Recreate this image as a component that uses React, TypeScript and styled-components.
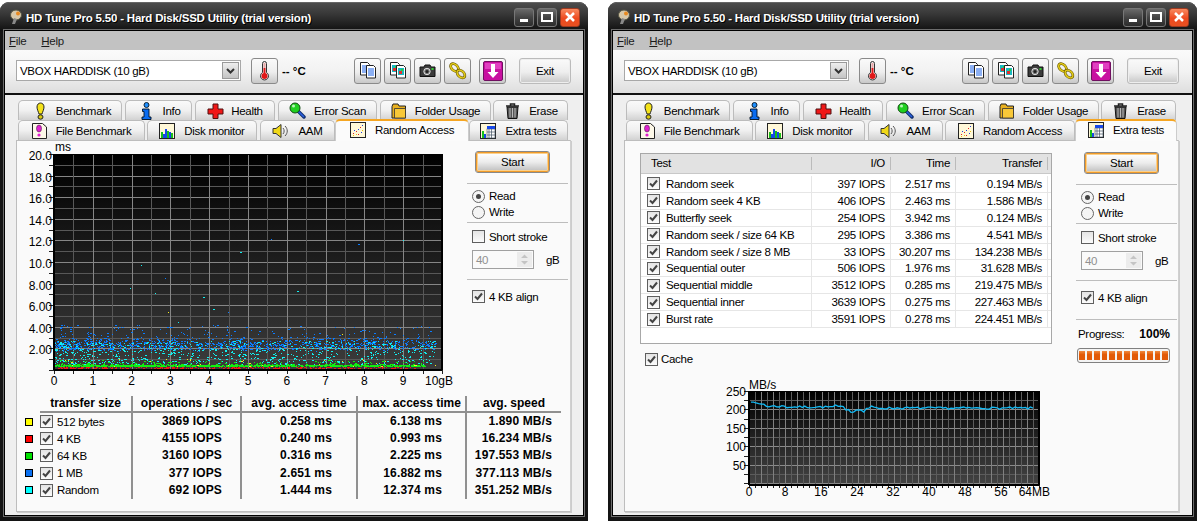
import React from 'react';
import styled, { createGlobalStyle } from 'styled-components';

const Global = createGlobalStyle`
  html, body { margin: 0; padding: 0; background: #fff; }
  #root { width: 1197px; height: 521px; overflow: hidden; }
  * { box-sizing: border-box; }
`;

const Page = styled.div`
  display: flex; gap: 20px; width: 1197px; height: 521px; padding-top: 2px; background: #fff;
  font: 11.5px "Liberation Sans", Arial, sans-serif; letter-spacing: -0.3px; color: #000; overflow: hidden;
`;
const Win = styled.div`
  flex: 0 0 ${p => p.$w}px; height: 519px; display: flex; flex-direction: column;
  background: #141414; border-radius: 9px 9px 0 0; padding: 0 5px 6px;
`;
const TitleBar = styled.div`
  height: 29px; margin: 0 -5px; padding: 0 8px 0 10px; display: flex; align-items: center;
  border-radius: 9px 9px 0 0; border-top: 1px solid #666;
  background: linear-gradient(#4c4c4c, #3a3a3a 35%, #1a1a1a 85%, #111);
`;
const TitleText = styled.div`
  flex: 1; margin-left: 2px; color: #fff; font-weight: 700; font-size: 11.5px; letter-spacing: -0.2px; padding-top: 1px;
  text-shadow: 1px 1px 0 #000;
`;
const WinBtn = styled.div`
  width: 20px; height: 19px; margin-left: 3px; border-radius: 3px; display: flex; align-items: center; justify-content: center;
  border: 1px solid ${p => p.$close ? '#a03a20' : '#777'};
  background: ${p => p.$close ? 'linear-gradient(#f88a60,#ee4a20 55%,#e85020)' : 'linear-gradient(#6a6a6a,#444 50%,#2c2c2c)'};
`;
const Client = styled.div`
  flex: 1; display: flex; flex-direction: column; min-height: 0;
  box-shadow: 0 0 0 1px #000, 0 0 0 2px #6c6c6c;
`;
const MenuBar = styled.div`
  height: 19px; background: #c2c2c2; display: flex; align-items: center; gap: 15px; padding: 0 0 0 4px; color: #1a1a1a;
`;
const MenuItem = styled.span`
  &::first-letter { text-decoration: underline; }
`;
const ToolBar = styled.div`
  height: 45px; display: flex; align-items: center; padding: 0 12px 2px 11px;
  background: linear-gradient(#fbfbfb, #f2f2f2 50%, #dedede);
  border-bottom: 2px solid #111; 
`;
const Combo = styled.div`
  width: 225px; height: 21px; border: 1px solid #a8a8a8; background: #fff; display: flex; align-items: center; justify-content: space-between;
  padding: 0 1px 0 3px; margin-right: 10px;
`;
const ComboBtn = styled.div`
  width: 17px; height: 17px; border: 1px solid #9a9a9a; background: linear-gradient(#eee, #c4c4c4); display: flex; align-items: center; justify-content: center;
`;
const IconBtn = styled.div`
  width: 27px; height: 26px; flex: none; margin-left: ${p => p.$ml ?? 3}px; border: 1px solid #8a8a8a; border-radius: 3px;
  display: flex; align-items: center; justify-content: center;
  background: linear-gradient(#fafafa, #eeeeee 55%, #c8c8c8);
`;
const Temp = styled.div`
  width: 76px; padding-left: 4px; font-weight: 700; font-size: 11.5px; letter-spacing: 0; white-space: nowrap;
`;
const ExitBtn = styled.div`
  width: 52px; height: 26px; margin-left: 13px; border: 1px solid #bbb; border-radius: 3px; display: flex; align-items: center; justify-content: center;
  background: linear-gradient(#fafafa, #eeeeee 55%, #c8c8c8); box-shadow: inset 0 0 0 1px #eee;
`;
const TabArea = styled.div`
  flex: 1; min-height: 0; background: #efefef; padding: 5px 12px 3px 11px; display: flex; flex-direction: column;
`;
const TabRow = styled.div`
  height: ${p => p.$h}px; display: flex; align-items: flex-end; padding-left: 2px; flex: none;
`;
const Tab = styled.div`
  flex: 0 0 ${p => p.$w}px; margin-right: ${p => p.$mr ?? 3}px; height: ${p => p.$active ? 22 : 20}px;
  display: flex; align-items: center; justify-content: center; gap: ${p => p.$gap ?? 9}px; padding-left: ${p => p.$pl ?? 0}px;
  border: 1px solid #bcbcbc; border-bottom: 0; border-radius: 5px 5px 0 0; white-space: nowrap;
  background: ${p => p.$active ? '#fbfbfb' : 'linear-gradient(#fafafa, #f0f0f0 50%, #d2d2d2)'};
  ${p => p.$active ? 'border-top: 2px solid #f5a623; border-color: #f5a623 #ccc transparent #ccc; margin-bottom:-1px; position: relative; z-index: 1; padding-bottom: 3px;' : ''}
`;
const TabPanel = styled.div`
  flex: 1; min-height: 0; width: 555px; background: #fafafa; border: 1px solid #bdbdbd; border-right-color: #d0d0d0;
  box-shadow: 1px 1px 0 #ccc; display: flex; flex-direction: column;
`;
const TopRow = styled.div`
  display: flex; flex: ${p => p.$fill ? 1 : 'none'}; min-height: 0;
`;
const ChartFrame = styled.div`
  flex: none; margin: 0 7px 0 7px; height: 255px;
  svg { display: block; }
`;
const Side = styled.div`
  width: 101px; flex: none; padding-top: ${p => p.$top}px;
`;
const StartBtn = styled.div`
  width: 73px; height: 20px; margin-left: 9px; border: 1px solid #f09a28; outline: 1px solid #888; outline-offset: 0; border-radius: 2px; display: flex; align-items: center; justify-content: center;
  background: linear-gradient(#fff, #ececec 50%, #c0c0c0); box-shadow: inset 0 0 0 1px #fbd08a;
`;
const Divider = styled.div`
  height: 1px; background: #bdbdbd; margin-top: ${p => p.$mt}px; margin-left: ${p => p.$ml ?? 0}px;
`;
const OptRow = styled.label`
  height: ${p => p.$h ?? 16}px; margin-top: ${p => p.$mt ?? 0}px; margin-left: ${p => p.$ml ?? 5}px; display: flex; align-items: center; gap: ${p => p.$gap ?? 4}px; white-space: nowrap;
`;
const RadioDot = styled.span`
  width: 13px; height: 13px; flex: none; border-radius: 50%; border: 1px solid #666; background: #f4f4f4; display: flex; align-items: center; justify-content: center;
  &::after { content: ''; width: 5px; height: 5px; border-radius: 50%; background: ${p => p.$on ? '#444' : 'transparent'}; }
`;
const Check = styled.span`
  width: 13px; height: 13px; flex: none; border: 1px solid #5e5e5e; display: flex; align-items: center; justify-content: center;
  background: linear-gradient(#e4e4e4, #fbfbfb);
`;
const SpinRow = styled.div`
  display: flex; align-items: center; margin: 6px 0 0 5px; height: 19px; color: #000;
`;
const SpinBox = styled.div`
  width: 62px; height: 19px; border: 1px solid #a0a0a0; padding: 0 1px 0 3px; display: flex; align-items: center; justify-content: space-between; color: #909090; margin-right: 12px; background: #fafafa;
`;
const SpinBtn = styled.div`
  width: 15px; height: 15px; background: #ececec; display: flex; align-items: center; justify-content: center;
`;
const ProgressRow = styled.div`
  display: flex; justify-content: space-between; width: 92px; height: 14px; margin: 7px 0 0 2px; align-items: center;
`;
const Bold = styled.b` font-size: 12px; letter-spacing: 0; `;
const ProgressBar = styled.div`
  width: 93px; height: 15px; margin: 7px 0 0 1px; border: 1px solid #808080; border-radius: 3px; padding: 2px 1px; display: flex; gap: 2px; background: #f4f4f4;
`;
const ProgressBlock = styled.span`
  flex: 1; background: linear-gradient(#f08a40, #e25a08 40%, #e25a08);
`;

/* left table */
const cols = '15px 91px 109px 116px 109px 96px';
const StatTable = styled.div`
  margin: 0 0 0 8px; width: 536px; flex: none; display: flex; flex-direction: column;
`;
const StatHead = styled.div`
  display: grid; grid-template-columns: ${cols}; height: 17px;
`;
const StatRow = styled.div`
  display: grid; grid-template-columns: ${cols}; height: 17.2px;
`;
const HeadCell = styled.div`
  font-size: 12px; font-weight: 700; text-align: center; letter-spacing: 0; border-bottom: 2px solid #909090; line-height: 14px; white-space: nowrap;
  ${p => p.$sep ? 'border-left: 2px solid #909090;' : ''} 
`;
const HeadBlank = styled.div``;
const SwatchCell = styled.div`
  display: flex; align-items: center;
`;
const Swatch = styled.span`
  width: 8px; height: 8px; border: 1px solid #000; background: ${p => p.$c};
`;
const NameCell = styled.div`
  display: flex; align-items: center; gap: 4px; white-space: nowrap;
`;
const ValCell = styled.div`
  border-left: 2px solid #909090; text-align: right; font-size: 12px; font-weight: 700; letter-spacing: 0.15px; padding-right: ${p => p.$pr}px; line-height: 17px; white-space: nowrap;
`;

/* right table */
const rcols = '171px 79px 65px 92px 1fr';
const Main = styled.div`
  width: 451px; flex: none; padding: 12px 0 0 15px;
`;
const TestBox = styled.div`
  width: 412px; height: 191px; border: 1px solid #a8a8a8; background: #fff;
`;
const TestHead = styled.div`
  display: grid; grid-template-columns: ${rcols}; height: 20px; background: #e2e2e2; align-items: center; margin-bottom: 2px; border-bottom: 1px solid #c8c8c8;
`;
const HCell = styled.div`
  padding: 0 ${p => p.$pr ?? 5}px 0 ${p => p.$pl ?? 0}px; text-align: ${p => p.$left ? 'left' : 'right'}; height: 13px; line-height: 13px; ${p => p.$sep ? 'border-right: 1px solid #bbb;' : ''}
`;
const TestRow = styled.div`
  display: grid; grid-template-columns: ${rcols}; height: 16.9px; border-bottom: 1px solid #e6e6e6;
`;
const RCell = styled.div`
  display: flex; align-items: center; justify-content: ${p => p.$left ? 'flex-start' : 'flex-end'}; gap: 6px; white-space: nowrap;
  padding: 0 ${p => p.$pr ?? 5}px 0 ${p => p.$pl ?? 0}px; border-right: 1px solid #e6e6e6;
`;
const CacheRow = styled.label`
  display: flex; align-items: center; gap: 3px; height: 16px; margin: 7px 0 0 5px;
`;
const LineChartFrame = styled.div`
  margin: 8px 0 0 70px; svg { display: block; }
`;

/* ---------- icons ---------- */
const Ic = styled.svg` flex: none; display: block; `;
const Svg = ({ s = 16, w, h, children }: any) => <Ic width={w ?? s} height={h ?? s} viewBox={`0 0 ${w ?? s} ${h ?? s}`}>{children}</Ic>;

const Exclaim = () => <Svg w={11} h={18}><path d="M2 5c0-5.300 7-5.300 7 0 0 2.500-1.500 5-2 7H4C3.500 10 2 7.500 2 5z" fill="#f4e21a" stroke="#222"/><ellipse cx="5.500" cy="15" rx="2.500" ry="2.200" fill="#d8c810" stroke="#222"/></Svg>;
const InfoI = () => <Svg w={11} h={18}><circle cx="5.500" cy="3" r="2.500" fill="#1e90ff" stroke="#123"/><path d="M1.500 7H8v8h2v2.500H1v-2.500h2v-5.500H1.500z" fill="#0a6cf0" stroke="#012" strokeWidth=".9"/></Svg>;
const Plus = () => <Svg w={17} h={16}><path d="M6 1h5v5h5v5h-5v4.500H6V11H1V6h5z" fill="#f01818" stroke="#501010"/></Svg>;
const Mag = () => <Svg w={17} h={17}><path d="M9 9l6 6" stroke="#123070" strokeWidth="3.500" strokeLinecap="round"/><path d="M9.500 9.500l5 5" stroke="#2a60e0" strokeWidth="1.500" strokeLinecap="round"/><circle cx="6" cy="6" r="5" fill="#20d020" stroke="#104810"/><circle cx="4.500" cy="4" r="1.500" fill="#b8f8b8"/></Svg>;
const Folder = () => <Svg w={16} h={16}><path d="M1 3.500 2 1h5l1 2h6.500v12H1z" fill="#e8b020" stroke="#222"/><path d="M3.500 5.500H14.500V15H3.500z" fill="#f8c838" stroke="#333" strokeWidth=".8"/></Svg>;
const Trash = () => <Svg w={15} h={16}><path d="M1 3h13M5.500 3V1h4v2" stroke="#222" fill="none" strokeWidth="1.500"/><path d="M2 4h11l-1 11.500H3z" fill="#555" stroke="#111"/><path d="M5 5v9.500M7.500 5v9.500M10 5v9.500" stroke="#bbb"/></Svg>;
const FileEx = () => <Svg w={15} h={17}><path d="M.5 1.500h10l4 3.500v11.500H.5z" fill="#fdf8e8" stroke="#222"/><ellipse cx="7" cy="6.500" rx="2.500" ry="3.500" fill="#e020d0" stroke="#502050" strokeWidth=".6"/><circle cx="7" cy="13" r="1.600" fill="#e020d0"/></Svg>;
const Bars = () => <Svg w={16} h={16}><rect x=".5" y=".5" width="15" height="15" fill="#fff8d8" stroke="#222"/><path d="M2 9h2v6H2zM8 8h2v7H8zM12 10h2v5h-2z" fill="#18c018"/><path d="M4 11h2v4H4zM6 6h2v9H6zM10 9h2v6h-2z" fill="#1848e8"/></Svg>;
const Speaker = () => <Svg w={17} h={16}><path d="M1 5.500h3L9 1.500v13L4 10.500H1z" fill="#f0d818" stroke="#333"/><path d="M11 5c1.500 1.500 1.500 4.500 0 6M13 3c3 3 3 7 0 10" stroke="#555" fill="none"/></Svg>;
const Scatter = () => <Svg w={16} h={16}><rect x=".5" y=".5" width="15" height="15" fill="#fff8d8" stroke="#222"/><path d="M3 11h1v1H3zM6 9h1v1H6zM10 5h1v1h-1zM8 12h1v1H8z" fill="#e02020"/><path d="M4 8h1v1H4zM8 7h1v1H8zM12 3h1v1h-1zM11 10h1v1h-1z" fill="#2040e0"/><path d="M3 13h1v1H3zM6 12h1v1H6zM12 8h1v1h-1z" fill="#e8c010"/></Svg>;
const TableChart = () => <Svg w={16} h={16}><rect x=".5" y=".5" width="15" height="15" fill="#fff8d8" stroke="#222"/><path d="M2 8h2v7H2z" fill="#18c018"/><path d="M4 11h2v4H4z" fill="#1848e8"/><rect x="7" y="6" width="8" height="9" fill="#fff" stroke="#456" strokeWidth=".6"/><path d="M7 3h8v3H7z" fill="#1848e8"/><path d="M9 6v9M11.500 6v9M7 9h8M7 12h8" stroke="#456" strokeWidth=".7"/></Svg>;

const Thermo = () => <Svg w={13} h={20}><path d="M4.500 2.500a2 2 0 0 1 4 0v9a4 4 0 1 1-4 0z" fill="#f4f0f0" stroke="#333"/><rect x="5.500" y="7" width="2" height="6" fill="#e01818"/><circle cx="6.500" cy="15" r="3" fill="#e01818"/><rect x="5.500" y="2" width="2" height="5" fill="#e8a8a8"/></Svg>;
const DocLines = ({ x, y, pics }: any) => <g transform={`translate(${x} ${y})`}><path d="M.5.500h7l2 2v10.500H.5z" fill="#fff" stroke="#222"/>{pics ? <g><rect x="2" y="3" width="6" height="7" fill="#18b8c0"/><rect x="3" y="6" width="3" height="3" fill="#e03030"/><rect x="5" y="4" width="2" height="2" fill="#30d030"/></g> : <path d="M2 4h6M2 6h6M2 8h6M2 10h6" stroke="#1860e8"/>}</g>;
const DocsIcon = ({ pics }: any) => <Svg w={16} h={17}><DocLines x={0} y={0} pics={pics}/><DocLines x={6} y={3} pics={pics}/></Svg>;
const Camera = () => <Svg w={17} h={13}><path d="M1 3h4l1-2h5l1 2h4v9.500H1z" fill="#3c3c3c" stroke="#111"/><circle cx="8" cy="7.500" r="3.200" fill="#777" stroke="#ddd"/><circle cx="8" cy="7.500" r="1.500" fill="#222"/><rect x="12.500" y="4" width="2" height="2" fill="#30d030"/></Svg>;
const Links = () => <Svg w={18} h={18}><g fill="none"><ellipse cx="5.500" cy="5.500" rx="4.500" ry="3" transform="rotate(45 5.500 5.500)" stroke="#6a5a00" strokeWidth="2.800"/><ellipse cx="5.500" cy="5.500" rx="4.500" ry="3" transform="rotate(45 5.500 5.500)" stroke="#e4cc18" strokeWidth="1.500"/><ellipse cx="12" cy="12" rx="4.500" ry="3" transform="rotate(45 12 12)" stroke="#6a5a00" strokeWidth="2.800"/><ellipse cx="12" cy="12" rx="4.500" ry="3" transform="rotate(45 12 12)" stroke="#e4cc18" strokeWidth="1.500"/></g></Svg>;
const Down = () => <Svg w={20} h={20}><rect x=".5" y=".5" width="19" height="19" rx="1.500" fill="#c810a0" stroke="#701060"/><rect x="2" y="2" width="16" height="6" fill="#e040c0"/><path d="M8 3h4v8h3.500L10 17 4.500 11H8z" fill="#fff"/></Svg>;
const AppIcon = () => <Svg w={14} h={16}><ellipse cx="6" cy="6" rx="5.500" ry="5" fill="#d8c8a8" stroke="#554"/><circle cx="8" cy="4.500" r="2" fill="#e88a20"/><path d="M4 9l-2 6h3l2-5z" fill="#888"/></Svg>;
const CheckMark = () => <Svg w={9} h={9}><path d="M1 4.500 3.500 7 8 1.500" fill="none" stroke="#444" strokeWidth="2"/></Svg>;
const Chevron = () => <Svg w={9} h={6}><path d="M1 1l3.500 3.500L8 1" fill="none" stroke="#333" strokeWidth="2"/></Svg>;
const SpinArrows = () => <Svg w={9} h={13}><path d="M4.500 1.500 8 5H1zM4.500 11.500 1 8h7z" fill="#c4c4c4"/></Svg>;
const Box = ({ on = true }: any) => <Check>{on ? <CheckMark/> : null}</Check>;

/* ---------- charts ---------- */
function rng(seed: number) {
  return () => {
    seed |= 0; seed = seed + 0x6d2b79f5 | 0;
    let t = Math.imul(seed ^ seed >>> 15, 1 | seed);
    t = t + Math.imul(t ^ t >>> 7, 61 | t) ^ t;
    return ((t ^ t >>> 14) >>> 0) / 4294967296;
  };
}
const PX = 30, PY = 13, PW = 388, PH = 216;
function dots(n: number, seed: number, yFn: (r: () => number) => number, xMax = PW * 0.98) {
  const r = rng(seed);
  let d = '';
  for (let i = 0; i < n; i++) {
    const x = Math.round(PX + 1 + Math.pow(r(), 1.2) * xMax);
    const y = Math.round(PY + PH - yFn(r) * 10.8);
    const w = r() < 0.3 ? 2 : 1;
    d += `M${x} ${y}h${w}v1h-${w}z`;
  }
  return d;
}
const blueD = dots(1150, 11, r => { const k = r(); return k < 0.82 ? 1.75 + r() * r() * 0.9 + r() * 0.75 : k < 0.992 ? 2.5 + r() * 1.7 : 4 + r() * 13; });
const cyanD = dots(800, 22, r => { const k = r(); return k < 0.985 ? 0.5 + r() * 2.2 : 2.5 + r() * 10; });
const yellowD = dots(36, 33, r => { const k = r(); return k < 0.92 ? 0.3 + r() * 0.8 : 2 + r() * 4; });
const greenD = dots(1300, 44, r => { const k = r(); return k < 0.88 ? 0.34 + r() * 0.18 : 0.4 + r() * 0.5; }, PW * 0.95);
const redD = dots(260, 55, r => 0.16 + r() * 0.12, PW * 0.93);

const yLabel = (n: number) => (n >= 10 ? `${n}.0` : `${n}.00`);

const ScatterChart = () => {
  const v = Array.from({ length: 21 }, (_, i) => i);
  return (
    <svg width="436" height="255" viewBox="0 0 436 255" fontFamily='"Liberation Sans", Arial, sans-serif' fontSize="12" letterSpacing="0">
      <defs><linearGradient id="gS" x1="0" y1="0" x2="0" y2="1"><stop offset="0" stopColor="#000"/><stop offset="1" stopColor="#3c3c3c"/></linearGradient></defs>
      <text x={PX + 1} y={PY - 3}>ms</text>
      <rect x={PX} y={PY} width={PW} height={PH} fill="url(#gS)"/>
      <g shapeRendering="crispEdges">
        {v.map(i => { const y = Math.round(PY + i * PH / 20); return <g key={i}>
          <line x1={PX - 5} x2={PX} y1={y + .5} y2={y + .5} stroke="#222"/>
          <line x1={PX} x2={PX + PW} y1={y + .5} y2={y + .5} stroke={i % 2 ? '#585858' : '#868686'}/>
        </g>; })}
        {v.map(i => { const x = Math.round(PX + i * PW / 20); return <g key={i}>
          <line y1={PY} y2={PY + PH} x1={x + .5} x2={x + .5} stroke={i % 2 ? '#585858' : '#868686'}/>
          <line y1={PY + PH} y2={PY + PH + 4} x1={x + .5} x2={x + .5} stroke="#222"/>
        </g>; })}
        <rect x={PX} y={PY} width={PW} height="1" fill="#000"/>
        <rect x={PX} y={PY + PH - 1} width={PW} height="2" fill="#000"/>
        <rect x={PX - 1} y={PY} width="2" height={PH} fill="#000"/>
        <rect x={PX + PW - 1} y={PY} width="2" height={PH} fill="#000"/>
        <path d={blueD} fill="#0a7cff"/>
        <path d={cyanD} fill="#10f0f0"/>
        <path d={greenD} fill="#10f010"/>
        <path d={redD} fill="#f01818"/>
        <path d={yellowD} fill="#f4f020"/>
      </g>
      {[20, 18, 16, 14, 12, 10, 8, 6, 4, 2].map(n => (
        <text key={n} x={PX - 2} y={PY + (20 - n) * 10.8 + 6} textAnchor="end">{yLabel(n)}</text>
      ))}
      {Array.from({ length: 10 }, (_, i) => i).map(i => (
        <text key={i} x={PX + i * PW / 10} y={PY + PH + 15} textAnchor="middle">{i}</text>
      ))}
      <text x={PX + PW + 11} y={PY + PH + 15} textAnchor="end">10gB</text>
    </svg>
  );
};

const LX = 39, LY = 16, LW = 290, LH = 94;
const speedLine = (() => {
  const r = rng(7);
  const pts: string[] = [];
  const n = 110;
  for (let i = 0; i <= n; i++) {
    const t = i / n * 64;
    const b = t < 1 ? 228 : t < 3 ? 220 : t < 8 ? 214 : t < 20 ? 212 : 209;
    let noise = (r() - 0.5) * (t > 19 && t < 28 ? 12 : 6);
    if (t > 22.5 && t < 23.5) noise -= 10;
    if (t > 25 && t < 26) noise -= 9;
    const v = b + noise;
    pts.push(`${(LX + 2 + i / n * (LW - 8)).toFixed(1)},${(LY + LH - v * 0.368).toFixed(1)}`);
  }
  return pts.join(' ');
})();

const SpeedChart = () => (
  <svg width="350" height="126" viewBox="0 0 350 126" fontFamily='"Liberation Sans", Arial, sans-serif' fontSize="12" letterSpacing="0">
    <defs><linearGradient id="gL" x1="0" y1="0" x2="0" y2="1"><stop offset="0" stopColor="#000"/><stop offset="1" stopColor="#444"/></linearGradient></defs>
    <text x={LX} y={LY - 2}>MB/s</text>
    <rect x={LX} y={LY} width={LW} height={LH} fill="url(#gL)"/>
    <g shapeRendering="crispEdges">
      {Array.from({ length: 11 }, (_, i) => i).map(i => { const y = Math.round(LY + i * LH / 10.2); return <g key={i}>
        <line x1={LX - 5} x2={LX} y1={y + .5} y2={y + .5} stroke="#222"/>
        <line x1={LX} x2={LX + LW} y1={y + .5} y2={y + .5} stroke={i % 2 ? '#5c5c5c' : '#8a8a8a'}/>
      </g>; })}
      {Array.from({ length: 49 }, (_, i) => i).map(i => { const x = Math.round(LX + i * LW / 48); return <g key={i}>
        <line y1={LY} y2={LY + LH} x1={x + .5} x2={x + .5} stroke={i % 2 ? '#5c5c5c' : '#808080'}/>
        <line y1={LY + LH} y2={LY + LH + 3} x1={x + .5} x2={x + .5} stroke="#222"/>
      </g>; })}
      <rect x={LX} y={LY} width={LW} height="1" fill="#000"/>
      <rect x={LX} y={LY + LH - 1} width={LW} height="2" fill="#000"/>
      <rect x={LX - 1} y={LY} width="2" height={LH} fill="#000"/>
      <rect x={LX + LW - 1} y={LY} width="2" height={LH} fill="#000"/>
    </g>
    <polyline points={speedLine} fill="none" stroke="#12baf5" strokeWidth="1.300"/>
    {[250, 200, 150, 100, 50].map((n, i) => (
      <text key={n} x={LX - 3} y={LY + i * 18.4 + 5} textAnchor="end">{n}</text>
    ))}
    {[0, 8, 16, 24, 32, 40, 48, 56].map(n => (
      <text key={n} x={LX + n * 4.5} y={LY + LH + 11} textAnchor="middle">{n}</text>
    ))}
    <text x={LX + LW + 11} y={LY + LH + 11} textAnchor="end">64MB</text>
  </svg>
);

/* ---------- window shell ---------- */
const row1 = [
  { t: 'Benchmark', w: 104, i: <Exclaim/>, gap: 10, pl: 6 },
  { t: 'Info', w: 67, i: <InfoI/>, gap: 11, pl: 4 },
  { t: 'Health', w: 80, i: <Plus/>, gap: 7, pl: 0 },
  { t: 'Error Scan', w: 99, i: <Mag/>, gap: 8, pl: 0 },
  { t: 'Folder Usage', w: 111, i: <Folder/>, gap: 8, pl: 0 },
  { t: 'Erase', w: 75, i: <Trash/>, gap: 9, pl: 2 },
];

const Shell = ({ width, active, children }: any) => {
  const ra = active === 'Random Access';
  const row2 = [
    { t: 'File Benchmark', w: 127, i: <FileEx/>, mr: 2 },
    { t: 'Disk monitor', w: 110, i: <Bars/>, mr: 3 },
    { t: 'AAM', w: 75, i: <Speaker/>, mr: ra ? 0 : 2 },
    { t: 'Random Access', w: ra ? 134 : 130, i: <Scatter/>, mr: 0 },
    { t: 'Extra tests', w: ra ? 99 : 102, i: <TableChart/>, mr: 0 },
  ];
  return (
    <Win $w={width}>
      <TitleBar>
        <AppIcon/>
        <TitleText>HD Tune Pro 5.50 - Hard Disk/SSD Utility (trial version)</TitleText>
        <WinBtn><Svg w={8} h={10}><rect x="0" y="7" width="8" height="3" fill="#fff"/></Svg></WinBtn>
        <WinBtn><Svg w={12} h={10}><rect x="1" y="1" width="10" height="8" fill="none" stroke="#fff" strokeWidth="2"/></Svg></WinBtn>
        <WinBtn $close><Svg w={12} h={12}><path d="M2 2l8 8M10 2l-8 8" stroke="#fff" strokeWidth="2.500"/></Svg></WinBtn>
      </TitleBar>
      <Client>
        <MenuBar><MenuItem>File</MenuItem><MenuItem>Help</MenuItem></MenuBar>
        <ToolBar>
          <Combo>VBOX HARDDISK (10 gB)<ComboBtn><Chevron/></ComboBtn></Combo>
          <IconBtn $ml={0}><Thermo/></IconBtn>
          <Temp>-- °C</Temp>
          <IconBtn $ml={0}><DocsIcon/></IconBtn>
          <IconBtn><DocsIcon pics/></IconBtn>
          <IconBtn><Camera/></IconBtn>
          <IconBtn><Links/></IconBtn>
          <IconBtn $ml={8}><Down/></IconBtn>
          <ExitBtn>Exit</ExitBtn>
        </ToolBar>
        <TabArea>
          <TabRow $h={20}>
            {row1.map(x => <Tab key={x.t} $w={x.w} $gap={x.gap} $pl={x.pl} $mr={x.t === 'Folder Usage' ? 2 : 3}>{x.i}<span>{x.t}</span></Tab>)}
          </TabRow>
          <TabRow $h={20}>
            {row2.map(x => <Tab key={x.t} $w={x.w} $mr={x.mr} $active={x.t === active}>{x.i}<span>{x.t}</span></Tab>)}
          </TabRow>
          <TabPanel>{children}</TabPanel>
        </TabArea>
      </Client>
    </Win>
  );
};

const SideCommon = ({ top, children }: any) => (
  <Side $top={top}>
    <StartBtn>Start</StartBtn>
    <Divider $mt={11}/>
    <OptRow $mt={4} $h={16}><RadioDot $on/>Read</OptRow>
    <OptRow $mt={0} $h={16}><RadioDot/>Write</OptRow>
    <Divider $mt={2}/>
    <OptRow $mt={6} $h={15}><Box on={false}/>Short stroke</OptRow>
    <SpinRow>
      <SpinBox>40<SpinBtn><SpinArrows/></SpinBtn></SpinBox>gB
    </SpinRow>
    <Divider $mt={10}/>
    <OptRow $mt={9} $h={15}><Box/>4 KB align</OptRow>
    {children}
  </Side>
);

const stats = [
  ['#ffff00', '512 bytes', '3869 IOPS', '0.258 ms', '6.138 ms', '1.890 MB/s'],
  ['#ff0000', '4 KB', '4155 IOPS', '0.240 ms', '0.993 ms', '16.234 MB/s'],
  ['#00e000', '64 KB', '3160 IOPS', '0.316 ms', '2.225 ms', '197.553 MB/s'],
  ['#0a70f0', '1 MB', '377 IOPS', '2.651 ms', '16.882 ms', '377.113 MB/s'],
  ['#00ffff', 'Random', '692 IOPS', '1.444 ms', '12.374 ms', '351.252 MB/s'],
];
const tests = [
  ['Random seek', '397 IOPS', '2.517 ms', '0.194 MB/s'],
  ['Random seek 4 KB', '406 IOPS', '2.463 ms', '1.586 MB/s'],
  ['Butterfly seek', '254 IOPS', '3.942 ms', '0.124 MB/s'],
  ['Random seek / size 64 KB', '295 IOPS', '3.386 ms', '4.541 MB/s'],
  ['Random seek / size 8 MB', '33 IOPS', '30.207 ms', '134.238 MB/s'],
  ['Sequential outer', '506 IOPS', '1.976 ms', '31.628 MB/s'],
  ['Sequential middle', '3512 IOPS', '0.285 ms', '219.475 MB/s'],
  ['Sequential inner', '3639 IOPS', '0.275 ms', '227.463 MB/s'],
  ['Burst rate', '3591 IOPS', '0.278 ms', '224.451 MB/s'],
];

export default function App() {
  return (
    <Page>
      <Global/>
      <Shell width={588} active="Random Access">
        <TopRow>
          <ChartFrame><ScatterChart/></ChartFrame>
          <SideCommon top={11}/>
        </TopRow>
        <StatTable>
          <StatHead>
            <HeadBlank/>
            <HeadCell>transfer size</HeadCell>
            <HeadCell $sep>operations / sec</HeadCell>
            <HeadCell $sep>avg. access time</HeadCell>
            <HeadCell $sep>max. access time</HeadCell>
            <HeadCell $sep>avg. speed</HeadCell>
          </StatHead>
          {stats.map(s => (
            <StatRow key={s[1]}>
              <SwatchCell><Swatch $c={s[0]}/></SwatchCell>
              <NameCell><Box/>{s[1]}</NameCell>
              <ValCell $pr={18}>{s[2]}</ValCell>
              <ValCell $pr={24}>{s[3]}</ValCell>
              <ValCell $pr={23}>{s[4]}</ValCell>
              <ValCell $pr={9}>{s[5]}</ValCell>
            </StatRow>
          ))}
        </StatTable>
      </Shell>
      <Shell width={589} active="Extra tests">
        <TopRow $fill>
          <Main>
            <TestBox>
              <TestHead>
                <HCell $left $pl={10} $sep>Test</HCell>
                <HCell $sep>I/O</HCell>
                <HCell $sep>Time</HCell>
                <HCell $sep>Transfer</HCell>
                <span/>
              </TestHead>
              {tests.map(t => (
                <TestRow key={t[0]}>
                  <RCell $left $pl={6}><Box/>{t[0]}</RCell>
                  <RCell>{t[1]}</RCell>
                  <RCell>{t[2]}</RCell>
                  <RCell>{t[3]}</RCell>
                  <span/>
                </TestRow>
              ))}
            </TestBox>
            <CacheRow><Box/>Cache</CacheRow>
            <LineChartFrame><SpeedChart/></LineChartFrame>
          </Main>
          <SideCommon top={12}>
            <Divider $mt={14}/>
            <ProgressRow><span>Progress:</span><Bold>100%</Bold></ProgressRow>
            <ProgressBar>{Array.from({ length: 12 }, (_, i) => <ProgressBlock key={i}/>)}</ProgressBar>
          </SideCommon>
        </TopRow>
      </Shell>
    </Page>
  );
}
